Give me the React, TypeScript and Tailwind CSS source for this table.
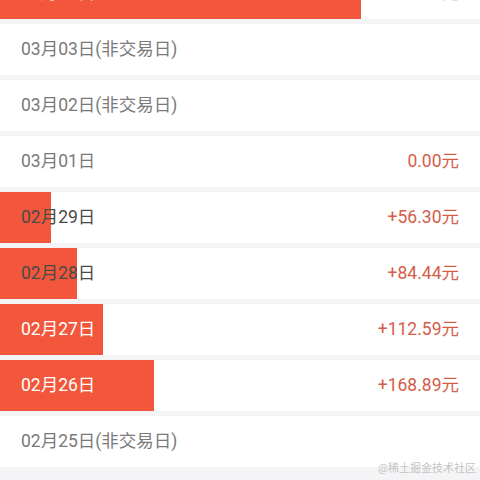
import React from "react";

type Row = {
  date: string;
  amount?: string;
  bar?: number; // bar width in px
  tone: "gray" | "dark" | "white";
};

const rows: Row[] = [
  { date: "03月04日", amount: "+395.63元", bar: 361, tone: "white" },
  { date: "03月03日(非交易日)", tone: "gray" },
  { date: "03月02日(非交易日)", tone: "gray" },
  { date: "03月01日", amount: "0.00元", tone: "gray" },
  { date: "02月29日", amount: "+56.30元", bar: 51, tone: "dark" },
  { date: "02月28日", amount: "+84.44元", bar: 77, tone: "dark" },
  { date: "02月27日", amount: "+112.59元", bar: 103, tone: "white" },
  { date: "02月26日", amount: "+168.89元", bar: 154, tone: "white" },
  { date: "02月25日(非交易日)", tone: "gray" },
];

const toneClass = {
  gray: "text-[#7a7a7a]",
  dark: "text-[#4a4a4a]",
  white: "text-white",
};

export default function App() {
  return (
    <div
      className="relative h-[480px] w-[480px] overflow-hidden bg-[#f4f4f6]"
      style={{ fontFamily: "Roboto, 'Noto Sans CJK SC', sans-serif" }}
    >
      <div className="mt-[-32px] flex flex-col gap-[5px]">
        {rows.map((r) => (
          <div key={r.date} className="relative flex h-[51px] items-center justify-between bg-white px-[21px]">
            {r.bar ? (
              <div className="absolute inset-y-0 left-0 bg-[#f2573b]" style={{ width: r.bar }} />
            ) : null}
            <span className={`relative text-[17.5px] ${toneClass[r.tone]}`}>{r.date}</span>
            {r.amount ? (
              <span className="relative text-[17.5px] text-[#d65c4a]">{r.amount}</span>
            ) : null}
          </div>
        ))}
      </div>
      <div className="absolute bottom-[3px] right-[4px] text-[11px] text-[#c4c4c4]">@稀土掘金技术社区</div>
    </div>
  );
}
